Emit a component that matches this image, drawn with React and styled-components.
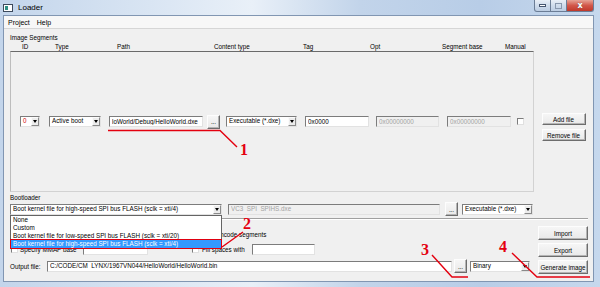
import React from 'react'
import styled, { createGlobalStyle } from 'styled-components'

const GlobalStyle = createGlobalStyle`
  html, body {
    margin: 0;
    padding: 0;
    background: #fff;
  }
  body {
    font-family: 'Liberation Sans', Arial, sans-serif;
  }
  * {
    box-sizing: border-box;
  }
`

const Window = styled.div`
  position: relative;
  width: 600px;
  height: 287px;
  display: flex;
  flex-direction: column;
  overflow: hidden;
  font-size: 6.3px;
  color: #000;
  background: linear-gradient(
    to right,
    #c3d5eb 0%,
    #d9e5f3 25%,
    #e9f0f8 42%,
    #c2d4ea 60%,
    #b8cde7 80%,
    #c6d8ed 100%
  );
`

const TitleBar = styled.div`
  height: 15px;
  display: flex;
  align-items: flex-start;
  padding-left: 3px;

  .title {
    margin-left: 5px;
    margin-top: 3px;
    font-size: 8px;
    line-height: 10px;
  }
`

const AppIcon = styled.svg`
  margin-top: 4px;
`

const Controls = styled.div`
  margin-left: auto;
  margin-right: 6px;
  display: flex;
  height: 12px;
`

const CaptionButton = styled.div`
  width: ${(p) => p.w}px;
  height: 12px;
  display: flex;
  align-items: center;
  justify-content: center;
  border: 1px solid #6b7d96;
  border-top: none;
  border-left: ${(p) => (p.first ? '1px solid #6b7d96' : 'none')};
  border-radius: ${(p) => (p.first ? '0 0 0 3px' : p.last ? '0 0 3px 0' : '0')};
  background: ${(p) =>
    p.close
      ? 'linear-gradient(#e6a396, #d2574a 50%, #c0392b)'
      : 'linear-gradient(#e9eff7, #cfdcec 50%, #bccde3)'};
  color: #fff;
  font-weight: bold;
  font-size: 8px;
  font-family: 'DejaVu Sans', sans-serif;
  text-shadow: 0 0 1px #555;
`

const Client = styled.div`
  flex: 1;
  margin: 0 6px 5px 3px;
  display: flex;
  flex-direction: column;
  background: #f0f0f0;
  border: 1px solid #8196b2;
  min-height: 0;
`

const MenuBar = styled.div`
  height: 13px;
  display: flex;
  align-items: center;
  padding-left: 1px;
  background: #f7f7f7;
  border-bottom: 1px solid #d6d6d6;
  font-size: 7px;
`

const MenuItem = styled.span`
  padding: 0 3px;
  margin-right: 1px;
`

const Content = styled.div`
  flex: 1;
  display: flex;
  flex-direction: column;
  padding-left: 6px;
`

const GroupLabel = styled.div`
  height: 8px;
  line-height: 8px;
  margin-top: ${(p) => p.mt}px;
  white-space: nowrap;
`

const Upper = styled.div`
  display: flex;
  margin-top: 1px;
`

const ListColumn = styled.div`
  width: 524px;
  display: flex;
  flex-direction: column;
`

const HeaderRow = styled.div`
  height: 8px;
  line-height: 8px;
  display: grid;
  grid-template-columns: 33px 62px 97px 89px 67px 72px 63px auto;
  padding-left: 12px;
  white-space: nowrap;
`

const SegmentBox = styled.div`
  height: 141px;
  display: flex;
  align-items: center;
  border: 1px solid;
  border-color: #6a6a6a #d2d2d2 #d2d2d2 #bdbdbd;
`

const SegmentRow = styled.div`
  display: grid;
  grid-template-columns: 29px 60px 98px 19px 79px 71px 71px 70px 8px;
  align-items: center;
  padding-left: 9px;
`

const SideButtons = styled.div`
  flex: 1;
  display: flex;
  flex-direction: column;
  align-items: center;
  gap: ${(p) => p.gap}px;
  padding-top: ${(p) => p.top}px;
`

const Combo = styled.div`
  width: ${(p) => p.w}px;
  height: 11px;
  margin-left: ${(p) => p.ml || 0}px;
  display: flex;
  align-items: stretch;
  flex: none;
  background: #fff;
  border: 1px solid;
  border-color: #7c7c7c #e2e2e2 #e2e2e2 #7c7c7c;

  .value {
    flex: 1;
    padding-left: 2px;
    line-height: 8px;
    white-space: nowrap;
    overflow: hidden;
    color: ${(p) => (p.red ? '#d40000' : '#000')};
  }
`

const ComboArrow = styled.span`
  width: 8px;
  display: flex;
  align-items: center;
  justify-content: center;
  background: #ececec;
  border: 1px solid;
  border-color: #fbfbfb #8a8a8a #8a8a8a #fbfbfb;

  &::after {
    content: '';
    border-left: 2.5px solid transparent;
    border-right: 2.5px solid transparent;
    border-top: 3px solid #000;
  }
`

const Field = styled.input`
  width: ${(p) => p.w}px;
  height: 11px;
  margin: 0 0 0 ${(p) => p.ml || 0}px;
  padding: 0 0 1px 2px;
  flex: none;
  font: inherit;
  line-height: 8px;
  color: ${(p) => (p.disabled ? '#a3a3a3' : '#000')};
  background: ${(p) => (p.disabled ? '#f0f0f0' : '#fff')};
  border: 1px solid;
  border-color: #7c7c7c #e2e2e2 #e2e2e2 #7c7c7c;
  outline: none;
`

const Button = styled.button`
  width: ${(p) => p.w}px;
  height: ${(p) => p.h || 14}px;
  margin: 0 0 0 ${(p) => p.ml || 0}px;
  padding: 0;
  flex: none;
  font: inherit;
  color: #000;
  background: linear-gradient(#f6f6f6, #e9e9e9);
  border: 1px solid;
  border-color: #fdfdfd #6d6d6d #6d6d6d #fdfdfd;
  box-shadow: inset -1px -1px 0 #b4b4b4;
  white-space: nowrap;
`

const Check = styled.span`
  display: inline-block;
  width: 7px;
  height: 7px;
  margin-left: ${(p) => p.ml || 0}px;
  background: #fff;
  border: 1px solid;
  border-color: #7c7c7c #e0e0e0 #e0e0e0 #7c7c7c;
  flex: none;
`

const ControlRow = styled.div`
  height: 14px;
  display: flex;
  align-items: center;
`

const Separator = styled.div`
  margin: 2px 5px 0 0;
  border-top: 1px solid #a0a0a0;
  border-bottom: 1px solid #fff;
`

const Lower = styled.div`
  display: flex;
`

const LowerLeft = styled.div`
  width: 523px;
  display: flex;
  flex-direction: column;
  padding-top: 9px;
`

const OptionRow = styled.div`
  height: 11px;
  margin-top: ${(p) => p.mt || 0}px;
  display: grid;
  grid-template-columns: 182px auto;
  align-items: center;
`

const OptionGroup = styled.div`
  display: flex;
  align-items: center;
`

const Label = styled.span`
  width: ${(p) => (p.w ? `${p.w}px` : 'auto')};
  margin-left: ${(p) => p.ml || 0}px;
  white-space: nowrap;
  flex: none;
`

const OutputRow = styled.div`
  height: 12px;
  margin-top: 5px;
  display: flex;
  align-items: center;
`

const DropList = styled.div`
  position: absolute;
  left: 10px;
  top: 215px;
  width: 212px;
  background: #fff;
  border: 1px solid #646464;
`

const DropItem = styled.div`
  height: 8px;
  line-height: 8px;
  padding-left: 2px;
  white-space: nowrap;
  background: ${(p) => (p.active ? '#3399ff' : 'transparent')};
  color: ${(p) => (p.active ? '#fff' : '#000')};
  outline: ${(p) => (p.active ? '1px solid #e00010' : 'none')};
`

const Marks = styled.svg`
  position: absolute;
  left: 0;
  top: 0;
  pointer-events: none;

  polyline {
    fill: none;
    stroke: #e4000f;
    stroke-width: 1.4;
  }
  text {
    fill: #e4000f;
    font-family: 'Liberation Serif', 'Times New Roman', serif;
    font-weight: bold;
    font-size: 16px;
  }
`

const Select = ({ w, value, red, ml }) => (
  <Combo w={w} red={red} ml={ml}>
    <span className="value">{value}</span>
    <ComboArrow />
  </Combo>
)

const headers = ['ID', 'Type', 'Path', 'Content type', 'Tag', 'Opt', 'Segment base', 'Manual']

const bootOptions = [
  'None',
  'Custom',
  'Boot kernel file for low-speed SPI bus FLASH (sclk = xti/20)',
  'Boot kernel file for high-speed SPI bus FLASH (sclk = xti/4)',
]

export default function App() {
  return (
    <>
      <GlobalStyle />
      <Window>
        <TitleBar>
          <AppIcon width="10" height="8" viewBox="0 0 10 8">
            <rect x="0.5" y="0.5" width="9" height="7" fill="#fff" stroke="#3c4a5c" />
            <rect x="2" y="2" width="3" height="4" fill="#2f8f84" />
          </AppIcon>
          <span className="title">Loader</span>
          <Controls>
            <CaptionButton w={17} first>
              <svg width="7" height="3" viewBox="0 0 7 3">
                <rect x="0.5" y="0.5" width="6" height="2" fill="#fff" stroke="#465670" />
              </svg>
            </CaptionButton>
            <CaptionButton w={16}>
              <svg width="7" height="6" viewBox="0 0 7 6">
                <rect x="0.5" y="0.5" width="6" height="5" fill="none" stroke="#8898ae" />
              </svg>
            </CaptionButton>
            <CaptionButton w={27} close last>
              x
            </CaptionButton>
          </Controls>
        </TitleBar>
        <Client>
          <MenuBar>
            <MenuItem>Project</MenuItem>
            <MenuItem>Help</MenuItem>
          </MenuBar>
          <Content>
            <GroupLabel mt={5}>Image Segments</GroupLabel>
            <Upper>
              <ListColumn>
                <HeaderRow>
                  {headers.map((h) => (
                    <span key={h}>{h}</span>
                  ))}
                </HeaderRow>
                <SegmentBox>
                  <SegmentRow>
                    <Select w={20} value="0" red />
                    <Select w={52} value="Active boot" />
                    <Field w={94} readOnly defaultValue="loWorld/Debug/HelloWorld.dxe" />
                    <Button w={13}>...</Button>
                    <Select w={71} value="Executable (*.dxe)" />
                    <Field w={64} readOnly defaultValue="0x0000" />
                    <Field w={63} disabled defaultValue="0x00000000" />
                    <Field w={64} disabled defaultValue="0x00000000" />
                    <Check />
                  </SegmentRow>
                </SegmentBox>
              </ListColumn>
              <SideButtons top={70} gap={4}>
                <Button w={44} h={12}>Add file</Button>
                <Button w={44} h={12}>Remove file</Button>
              </SideButtons>
            </Upper>

            <GroupLabel mt={2}>Bootloader</GroupLabel>
            <ControlRow>
              <Select w={212} value="Boot kernel file for high-speed SPI bus FLASH (sclk = xti/4)" />
              <Field w={212} ml={6} disabled defaultValue="VC3_SPI_SPIHS.dxe" />
              <Button w={13} ml={5}>...</Button>
              <Select w={71} ml={4} value="Executable (*.dxe)" />
            </ControlRow>
            <Separator />

            <Lower>
              <LowerLeft>
                <OptionRow>
                  <span />
                  <OptionGroup>
                    <Check ml={14} />
                    <Label ml={3}>Encode segments</Label>
                  </OptionGroup>
                </OptionRow>
                <OptionRow mt={4}>
                  <OptionGroup>
                    <Check ml={1} />
                    <Label ml={2} w={63}>Specify MMAP base</Label>
                    <Field w={65} readOnly defaultValue="" />
                  </OptionGroup>
                  <OptionGroup>
                    <Check />
                    <Label ml={3} w={50}>Fill spaces with</Label>
                    <Field w={63} readOnly defaultValue="" />
                  </OptionGroup>
                </OptionRow>
                <OutputRow>
                  <Label w={37}>Output file:</Label>
                  <Field w={405} readOnly defaultValue="C:/CODE/CM_LYNX/1967VN044/HelloWorld/HelloWorld.bin" />
                  <Button w={13} ml={2}>...</Button>
                  <Select w={60} ml={3} value="Binary" />
                </OutputRow>
              </LowerLeft>
              <SideButtons top={6} gap={3}>
                <Button w={50}>Import</Button>
                <Button w={50}>Export</Button>
                <Button w={50}>Generate image</Button>
              </SideButtons>
            </Lower>
          </Content>
        </Client>

        <DropList>
          {bootOptions.map((o, i) => (
            <DropItem key={o} active={i === bootOptions.length - 1}>
              {o}
            </DropItem>
          ))}
        </DropList>

        <Marks width="600" height="287" viewBox="0 0 600 287">
          <polyline points="108,130.5 220,130.5 237,147" />
          <text x="240" y="155">1</text>
          <polyline points="222,247 243,232" />
          <text x="243" y="229" fontSize="15">2</text>
          <polyline points="432,255 452,277 468,277" />
          <text x="421" y="255">3</text>
          <polyline points="512,253 537,277 590,277" />
          <text x="499" y="252">4</text>
        </Marks>
      </Window>
    </>
  )
}
